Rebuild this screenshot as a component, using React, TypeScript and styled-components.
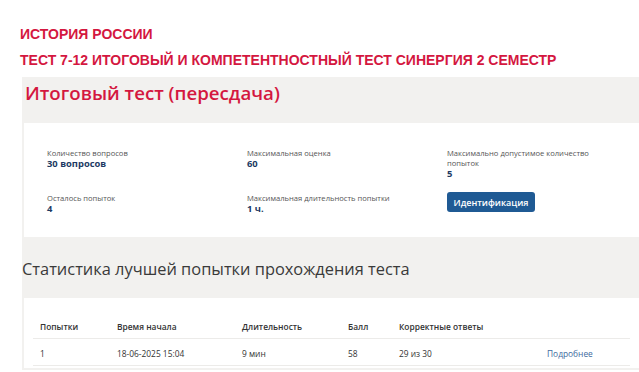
import React from 'react';
import styled, { createGlobalStyle } from 'styled-components';

const colors = {
  red: '#d4173f',
  panel: '#f2f1ef',
  value: '#1d3a63',
  button: '#1f5a94',
  link: '#3d6a9e',
  text: '#3a3a3a',
  label: '#555555',
  border: '#ecebe9',
};

const GlobalStyle = createGlobalStyle`
  html, body {
    margin: 0;
    padding: 0;
    background: #ffffff;
  }
  body {
    font-family: "Open Sans", "Noto Sans", sans-serif;
    color: ${colors.text};
  }
`;

const Page = styled.div`
  width: 639px;
  height: 372px;
  overflow: hidden;
`;

const Header = styled.div`
  padding: 27px 0 0 20px;
  height: 77px;
  box-sizing: border-box;
`;

const Crumb = styled.div`
  font-family: "Liberation Sans", Arial, sans-serif;
  font-weight: 700;
  font-size: 14px;
  line-height: 15px;
  color: ${colors.red};
  text-transform: uppercase;
  & + & {
    margin-top: 11px;
  }
`;

const Panel = styled.div`
  margin-left: 22px;
  padding: 4px 0 0 0;
  background: ${colors.panel};
  height: 293px;
  box-sizing: border-box;
`;

const Title = styled.h1`
  margin: 0 0 18px 3px;
  font-size: 18.7px;
  line-height: 24px;
  font-weight: 600;
  color: ${colors.red};
`;

const Card = styled.div`
  margin-left: 2px;
  background: #ffffff;
`;

const InfoCard = styled(Card)`
  padding: 25px 0 23px 23px;
  display: grid;
  grid-template-columns: 200px 200px 170px;
  row-gap: 14px;
`;

const Field = styled.div`
  display: flex;
  flex-direction: column;
  align-items: flex-start;
`;

const Label = styled.span`
  font-size: 7.6px;
  line-height: 10px;
  color: ${colors.label};
`;

const Value = styled.span`
  font-size: 9.4px;
  line-height: 11px;
  font-weight: 700;
  color: ${colors.value};
`;

const Button = styled.button`
  margin-top: -1px;
  width: 88px;
  height: 20px;
  border: none;
  border-radius: 3px;
  background: ${colors.button};
  color: #ffffff;
  font-family: "Open Sans", sans-serif;
  font-size: 9px;
  font-weight: 600;
  padding: 0;
  cursor: pointer;
`;

const SectionTitle = styled.h2`
  margin: 22px 0 19px 0;
  font-size: 16.4px;
  line-height: 20px;
  font-weight: 400;
  color: ${colors.text};
`;

const TableCard = styled(Card)`
  padding: 16px 9px 0 9px;
  height: 54px;
`;

const Table = styled.table`
  width: 100%;
  border-collapse: collapse;
  table-layout: fixed;
  font-size: 8.4px;
  color: #333333;
`;

const Th = styled.th<{ $w?: number }>`
  box-sizing: border-box;
  width: ${(p) => (p.$w ? `${p.$w}px` : 'auto')};
  text-align: left;
  font-weight: 600;
  padding: 2px 0 0 7px;
  height: 24px;
  border-bottom: 1px solid ${colors.border};
`;

const Td = styled.td`
  box-sizing: border-box;
  padding: 3px 0 0 7px;
  height: 27px;
  border-bottom: 1px solid ${colors.border};
`;

const More = styled.a`
  color: ${colors.link};
  text-decoration: none;
`;

const info = [
  { label: 'Количество вопросов', value: '30 вопросов' },
  { label: 'Максимальная оценка', value: '60' },
  { label: 'Максимально допустимое количество попыток', value: '5' },
  { label: 'Осталось попыток', value: '4' },
  { label: 'Максимальная длительность попытки', value: '1 ч.' },
];

const columns = [
  { title: 'Попытки', w: 77 },
  { title: 'Время начала', w: 125 },
  { title: 'Длительность', w: 106 },
  { title: 'Балл', w: 51 },
  { title: 'Корректные ответы', w: 148 },
  { title: '' },
];

export default function App() {
  return (
    <Page>
      <GlobalStyle />
      <Header>
        <Crumb>История России</Crumb>
        <Crumb>Тест 7-12 Итоговый и компетентностный тест Синергия 2 семестр</Crumb>
      </Header>
      <Panel>
        <Title>Итоговый тест (пересдача)</Title>
        <InfoCard>
          {info.map((f) => (
            <Field key={f.label}>
              <Label>{f.label}</Label>
              <Value>{f.value}</Value>
            </Field>
          ))}
          <Field>
            <Button>Идентификация</Button>
          </Field>
        </InfoCard>
        <SectionTitle>Статистика лучшей попытки прохождения теста</SectionTitle>
        <TableCard>
          <Table>
            <thead>
              <tr>
                {columns.map((c, i) => (
                  <Th key={i} $w={c.w}>
                    {c.title}
                  </Th>
                ))}
              </tr>
            </thead>
            <tbody>
              <tr>
                <Td>1</Td>
                <Td>18-06-2025 15:04</Td>
                <Td>9 мин</Td>
                <Td>58</Td>
                <Td>29 из 30</Td>
                <Td>
                  <More href="#">Подробнее</More>
                </Td>
              </tr>
            </tbody>
          </Table>
        </TableCard>
      </Panel>
    </Page>
  );
}
